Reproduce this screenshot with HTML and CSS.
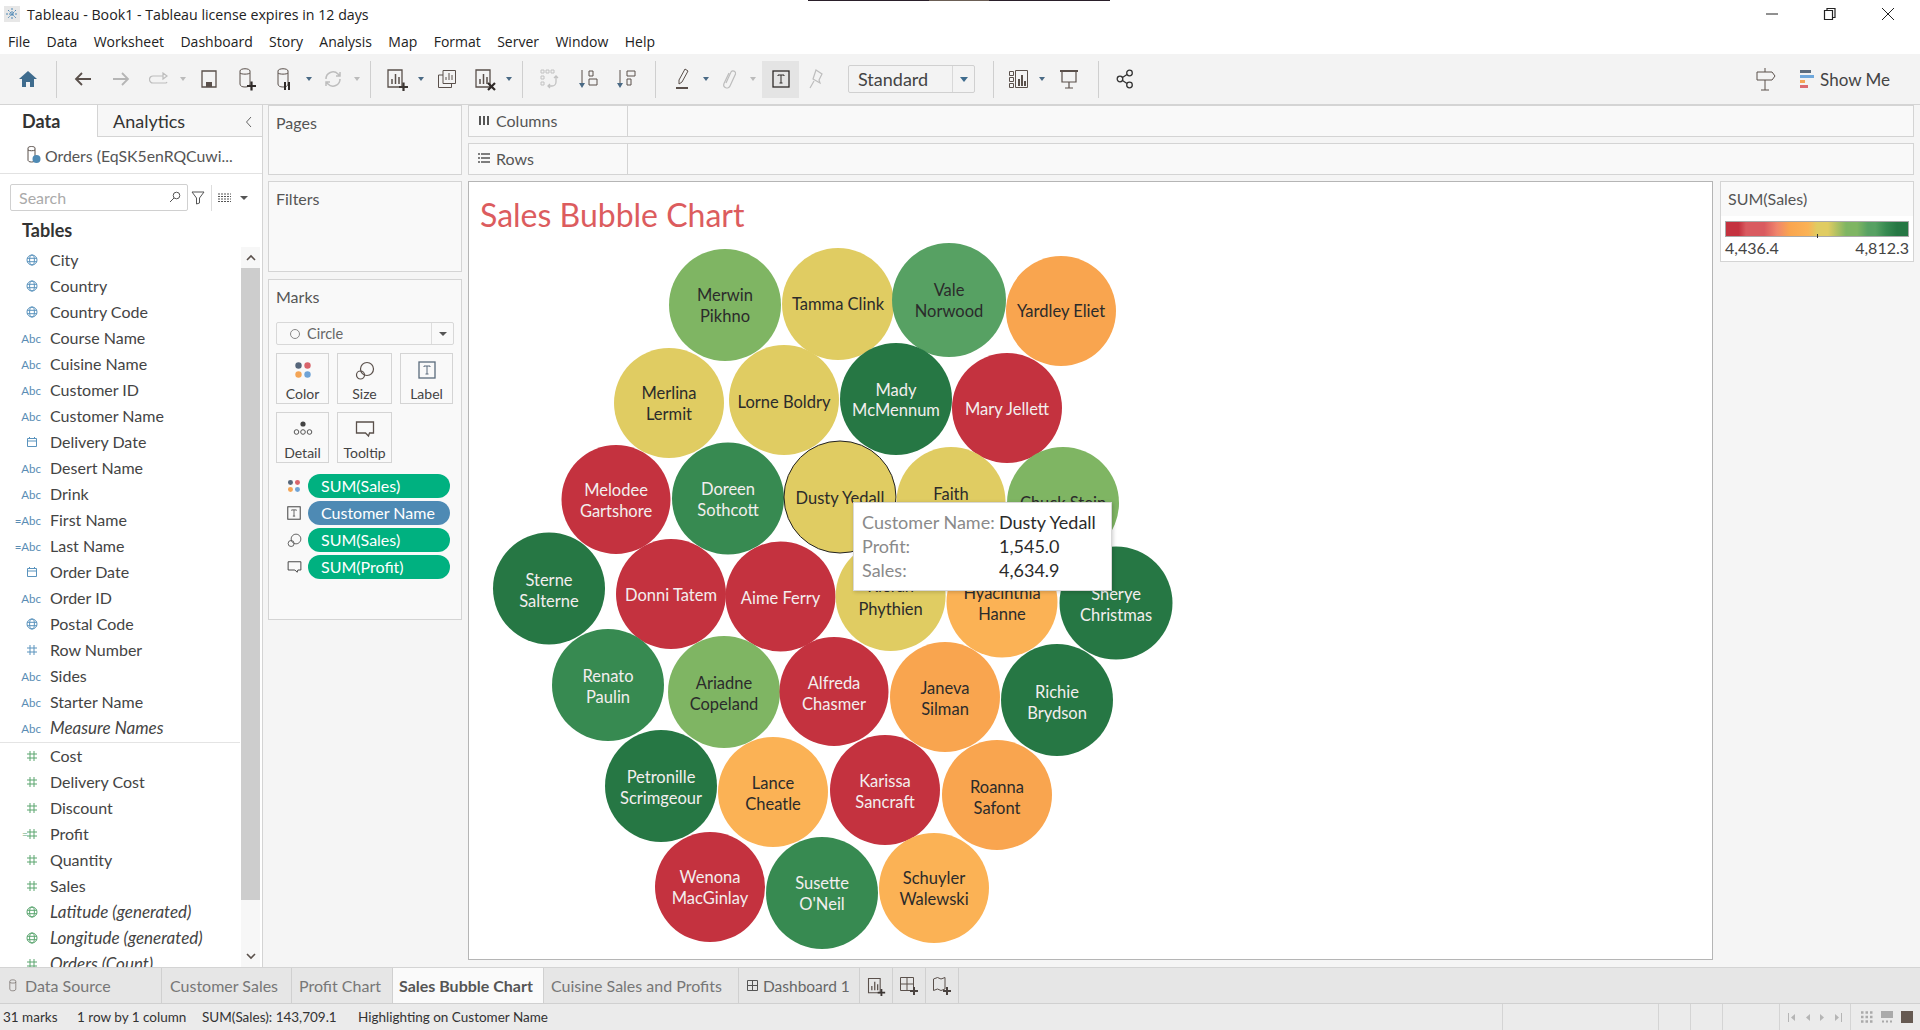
FILE: index.html
```html
<!DOCTYPE html>
<html lang="en">
<head>
    <meta charset="UTF-8">
    <title>Tableau - Book1</title>
    <link rel="stylesheet" href="styles.css">
</head>
<body>
    <svg class="defs" width="0" height="0">
        <symbol id="i-globe" viewBox="0 0 12 12"><g fill="none" stroke="currentColor"><circle cx="6" cy="6" r="5"/><ellipse cx="6" cy="6" rx="2.4" ry="5"/><path d="M1 4.300h10M1 7.700h10"/></g></symbol>
        <symbol id="i-cal" viewBox="0 0 12 12"><path fill="none" stroke="currentColor" d="M1.500 2.500h9v8h-9zM1.500 5h9M3.500 1v2M8.500 1v2"/></symbol>
        <symbol id="i-hash" viewBox="0 0 12 12"><path fill="none" stroke="currentColor" d="M4 1v10M8 1v10M1 4h10M1 8h10"/></symbol>
        <symbol id="i-db" viewBox="0 0 20 24"><path fill="none" stroke="currentColor" d="M3 4c0-3 10-3 10 0v13c0 2-2 3-5 3s-5-1-5-3zM3 6c1 1.500 9 1.500 10 0"/></symbol>
        <symbol id="i-t" viewBox="0 0 18 18"><rect x="1" y="1" width="16" height="16" fill="none" stroke="currentColor" stroke-width="1.300"/><path fill="none" stroke="currentColor" d="M6 6V5h6v1M9 5v8M7.500 13h3"/></symbol>
        <symbol id="i-dots" viewBox="0 0 18 18"><circle cx="4.500" cy="4.500" r="3.200" fill="#56667a"/><circle cx="13.500" cy="4.500" r="3.200" fill="#d9646b"/><circle cx="4.500" cy="13.500" r="3.200" fill="#f4a556"/><circle cx="13.500" cy="13.500" r="3.200" fill="#6fa3d6"/></symbol>
        <symbol id="i-size" viewBox="0 0 20 20"><g fill="none" stroke="currentColor" stroke-width="1.200"><circle cx="12" cy="8" r="6.500"/><circle cx="5.500" cy="14" r="4"/></g></symbol>
        <symbol id="i-tip" viewBox="0 0 20 18"><path fill="none" stroke="currentColor" stroke-width="1.300" d="M1.500 2h17v11h-4l-1 3-3-3h-9z"/></symbol>
        <symbol id="i-plus-chart" viewBox="0 0 24 24"><path fill="none" stroke="currentColor" stroke-width="1.300" d="M3 3h14v17H3z"/><path fill="none" stroke="currentColor" stroke-width="1.500" d="M7 17v-5M10.500 17V7M14 17v-7"/><path fill="none" stroke="#3c3633" stroke-width="2.200" d="M14 20h9M18.500 15.500v9" /></symbol>
    </svg>

    <header class="titlebar">
        <svg class="logo" width="18" height="18" viewBox="0 0 18 18"><rect x="1" y="1" width="16" height="16" fill="#e7e7e7"/><g stroke="#4d87b5"><path d="M9 3v12M3 9h12M5 5l8 8M13 5l-8 8" stroke-dasharray="2 1"/></g></svg>
        <span class="doc-title">Tableau - Book1 - Tableau license expires in 12 days</span>
        <div class="win-btns">
            <svg width="14" height="14" viewBox="0 0 14 14"><path stroke="#222" d="M1 7h12"/></svg>
            <svg width="14" height="14" viewBox="0 0 14 14"><path fill="none" stroke="#222" stroke-width="1.200" d="M1.500 3.500h8v9h-8zM4 3.500V1.500h8v9H9.500"/></svg>
            <svg width="14" height="14" viewBox="0 0 14 14"><path stroke="#222" d="M1 1l12 12M13 1L1 13"/></svg>
        </div>
        <div class="top-line"></div>
    </header>

    <nav class="menubar">
        <span>File</span><span>Data</span><span>Worksheet</span><span>Dashboard</span><span>Story</span><span>Analysis</span><span>Map</span><span>Format</span><span>Server</span><span>Window</span><span>Help</span>
    </nav>

    <div class="toolbar">
        <span class="tool home"><svg width="20" height="18" viewBox="0 0 20 18"><path fill="#3f6c8e" d="M10 1L1 9h3v8h4v-5h4v5h4V9h3z"/></svg></span>
        <i class="sep"></i>
        <span class="tool"><svg width="20" height="16" viewBox="0 0 20 16"><path fill="none" stroke="#5a504b" stroke-width="1.800" d="M18 8H3M9 2L3 8l6 6"/></svg></span>
        <span class="tool off"><svg width="20" height="16" viewBox="0 0 20 16"><path fill="none" stroke="#b5b5b5" stroke-width="1.800" d="M2 8h15M11 2l6 6-6 6"/></svg></span>
        <span class="tool off"><svg width="20" height="14" viewBox="0 0 20 14"><path fill="none" stroke="#bdbdbd" stroke-width="1.200" d="M14 4H4a3 3 0 0 0 0 7h13a3 3 0 0 0 1-1M14 1v6l4-3z"/></svg></span>
        <i class="caret off"></i>
        <span class="tool shift2"><svg width="18" height="20" viewBox="0 0 18 20"><path fill="none" stroke="#5a504b" stroke-width="1.300" d="M2 2h14v16H2z"/><path fill="#5a504b" d="M6 13h6v5H6z"/></svg></span>
        <span class="tool"><svg width="20" height="24" color="#5a504b"><use href="#i-db"/><path fill="none" stroke="#2f2a28" stroke-width="2.200" d="M10 19h9M14.500 14.500v9"/></svg></span>
        <span class="tool"><svg width="20" height="24" color="#5a504b"><use href="#i-db"/><path fill="none" stroke="#2f2a28" stroke-width="2" d="M10 15v8M14 15v8"/></svg></span>
        <i class="caret"></i>
        <span class="tool off"><svg width="20" height="20" viewBox="0 0 20 20"><path fill="none" stroke="#bdbdbd" stroke-width="1.500" d="M3 10a7 7 0 0 1 12-5l2 2M17 10a7 7 0 0 1-12 5l-2-2M17 3v4h-4M3 17v-4h4"/></svg></span>
        <i class="caret off"></i>
        <i class="sep"></i>
        <span class="tool"><svg width="24" height="24" color="#5a504b"><use href="#i-plus-chart"/></svg></span>
        <i class="caret"></i>
        <span class="tool shift2"><svg width="20" height="20" viewBox="0 0 20 20"><path fill="none" stroke="#5a504b" d="M6 1.500h12.500v13H6zM1.500 6H6M1.500 6v12.500h13V14.500M9 11V8M12 11V4M15 11V6"/></svg></span>
        <span class="tool"><svg width="24" height="24" viewBox="0 0 24 24"><path fill="none" stroke="#5a504b" stroke-width="1.300" d="M3 3h14v17H3z"/><path fill="none" stroke="#5a504b" stroke-width="1.500" d="M7 17v-5M10.500 17V7M14 17v-7"/><path fill="none" stroke="#2f2a28" stroke-width="2.200" d="M15 16l7 7M22 16l-7 7"/></svg></span>
        <i class="caret"></i>
        <i class="sep"></i>
        <span class="tool off"><svg width="20" height="22" viewBox="0 0 20 22"><g fill="none" stroke="#c2c2c2"><path d="M2 2h3v3H2zM7 2h3v3H7zM12 2h3v3h-3zM2 8h3v3H2zM2 14h3v3H2z"/><path stroke-width="1.300" d="M17 8v6a4 4 0 0 1-4 4H9M11 16l-2 2 2 2M15 10l2-2 2 2"/></g></svg></span>
        <span class="tool shift2"><svg width="20" height="20" viewBox="0 0 20 20"><path fill="none" stroke="#5a504b" d="M3 1v15M10 2h4v5h-4zM10 10h8v6h-8z"/><path fill="#4a6a85" d="M0 14h6l-3 5z"/></svg></span>
        <span class="tool"><svg width="20" height="20" viewBox="0 0 20 20"><path fill="none" stroke="#5a504b" d="M3 1v15M10 2h8v5h-8zM10 10h4v6h-4z"/><path fill="#4a6a85" d="M0 14h6l-3 5z"/></svg></span>
        <i class="sep wide"></i>
        <span class="tool"><svg width="18" height="24" viewBox="0 0 18 24"><path fill="none" stroke="#5a504b" d="M11 2l3 2-6 11-3 2v-4z"/><path fill="#5a504b" d="M2 20h12v2H2z"/></svg></span>
        <i class="caret narrow"></i>
        <span class="tool off"><svg width="16" height="22" viewBox="0 0 16 22"><path fill="none" stroke="#bdbdbd" stroke-width="1.200" d="M5 15l5-11a2.500 2.500 0 0 1 4.500 2L9 18a3.200 3.200 0 0 1-6-2.500L8 5"/></svg></span>
        <i class="caret off"></i>
        <span class="tool active"><svg width="18" height="18" color="#2e2a28"><use href="#i-t"/></svg></span>
        <span class="tool pin off"><svg width="16" height="22" viewBox="0 0 16 22"><path fill="none" stroke="#bdbdbd" stroke-width="1.200" d="M8 2l6 4-3 6 1 3-7-4zM6 13l-4 7"/></svg></span>
        <div class="fit-select"><span>Standard</span><b><i class="caret blue"></i></b></div>
        <i class="sep fit-sep"></i>
        <span class="tool viz"><svg width="22" height="20" viewBox="0 0 22 20"><g fill="none" stroke="#5a504b"><path d="M1.500 2.500h4v4h-4zM1.500 8.500h4v4h-4zM1.500 14.500h4v4h-4zM7.500 1.500h12v17h-12z"/></g><path fill="#5a504b" d="M10 10h2v7h-2zM13 6h2v11h-2zM16 12h2v5h-2z"/></svg></span>
        <i class="caret"></i>
        <span class="tool shift3"><svg width="20" height="20" viewBox="0 0 20 20"><path fill="none" stroke="#5a504b" stroke-width="1.200" d="M3 2v11h14V2M10 13v6M6 19h8"/><path fill="#5a504b" d="M1 1h18v2H1z"/></svg></span>
        <i class="sep share-sep"></i>
        <span class="tool"><svg width="18" height="20" viewBox="0 0 18 20"><g fill="none" stroke="#333" stroke-width="1.300"><circle cx="13.500" cy="4" r="2.800"/><circle cx="4" cy="10" r="2.800"/><circle cx="13.500" cy="16" r="2.800"/><path d="M6.500 8.500L11 5.500M6.500 11.500l4.500 3"/></g></svg></span>
        <div class="tool-right">
            <svg width="20" height="24" viewBox="0 0 20 24"><path fill="none" stroke="#5a504b" d="M1 5h15l3 4-3 4H1zM9 1v4M9 13v10M5 23h8"/></svg>
            <div class="show-me">
                <svg width="14" height="20" viewBox="0 0 14 20"><path fill="#5d6d7e" d="M0 1h11v3H0z"/><path fill="#6fa8dc" d="M0 6h14v3H0z"/><path fill="#f4a556" d="M0 11h5v3H0z"/><path fill="#dc6a70" d="M0 16h8v3H0z"/></svg>
                <span>Show Me</span>
            </div>
        </div>
    </div>

    <main class="workspace">
        <aside class="data-pane">
            <div class="pane-tabs">
                <div class="pane-tab on">Data</div>
                <div class="pane-tab">Analytics</div>
                <svg class="collapse" width="8" height="12" viewBox="0 0 8 12"><path fill="none" stroke="#666" d="M6 1L1.500 6 6 11"/></svg>
            </div>
            <div class="source">
                <svg width="16" height="20" viewBox="0 0 16 20"><path fill="none" stroke="#5a504b" d="M2 3c0-2 7-2 7 0v12c0 1-1 2-3.500 2S2 16 2 15zM2 5c1 1 6 1 7 0"/><circle cx="10.500" cy="14" r="4" fill="#4e8ab4"/></svg>
                <span>Orders (EqSK5enRQCuwi...</span>
            </div>
            <div class="search-row">
                <div class="search"><span>Search</span><svg width="12" height="12" viewBox="0 0 12 12"><path fill="none" stroke="#555" d="M5 7l-4 4"/><circle cx="7.500" cy="4.500" r="3.300" fill="none" stroke="#555"/></svg></div>
                <svg class="funnel" width="14" height="14" viewBox="0 0 14 14"><path fill="none" stroke="#555" d="M1 1h12L8.500 7v5l-3 1V7z"/></svg>
                <i class="mini-sep"></i>
                <svg class="view-ic" width="13" height="10" viewBox="0 0 13 10"><path stroke="#555" stroke-dasharray="2 1" d="M0 1h13M0 3.500h13M0 6h13M0 8.500h13"/></svg>
                <i class="caret dark"></i>
            </div>
            <h3 class="tables">Tables</h3>
            <div class="fields-wrap">
                <ul class="fields">
                    <li><span class="ic blue"><svg width="12" height="12"><use href="#i-globe"/></svg></span>City</li>
                    <li><span class="ic blue"><svg width="12" height="12"><use href="#i-globe"/></svg></span>Country</li>
                    <li><span class="ic blue"><svg width="12" height="12"><use href="#i-globe"/></svg></span>Country Code</li>
                    <li><span class="ic abc">Abc</span>Course Name</li>
                    <li><span class="ic abc">Abc</span>Cuisine Name</li>
                    <li><span class="ic abc">Abc</span>Customer ID</li>
                    <li><span class="ic abc">Abc</span>Customer Name</li>
                    <li><span class="ic blue"><svg width="12" height="12"><use href="#i-cal"/></svg></span>Delivery Date</li>
                    <li><span class="ic abc">Abc</span>Desert Name</li>
                    <li><span class="ic abc">Abc</span>Drink</li>
                    <li><span class="ic abc">=Abc</span>First Name</li>
                    <li><span class="ic abc">=Abc</span>Last Name</li>
                    <li><span class="ic blue"><svg width="12" height="12"><use href="#i-cal"/></svg></span>Order Date</li>
                    <li><span class="ic abc">Abc</span>Order ID</li>
                    <li><span class="ic blue"><svg width="12" height="12"><use href="#i-globe"/></svg></span>Postal Code</li>
                    <li><span class="ic blue"><svg width="12" height="12"><use href="#i-hash"/></svg></span>Row Number</li>
                    <li><span class="ic abc">Abc</span>Sides</li>
                    <li><span class="ic abc">Abc</span>Starter Name</li>
                    <li class="gen"><span class="ic abc">Abc</span>Measure Names</li>
                </ul>
                <ul class="fields measures">
                    <li><span class="ic green"><svg width="12" height="12"><use href="#i-hash"/></svg></span>Cost</li>
                    <li><span class="ic green"><svg width="12" height="12"><use href="#i-hash"/></svg></span>Delivery Cost</li>
                    <li><span class="ic green"><svg width="12" height="12"><use href="#i-hash"/></svg></span>Discount</li>
                    <li><span class="ic green calc"><svg width="12" height="12"><use href="#i-hash"/></svg></span>Profit</li>
                    <li><span class="ic green"><svg width="12" height="12"><use href="#i-hash"/></svg></span>Quantity</li>
                    <li><span class="ic green"><svg width="12" height="12"><use href="#i-hash"/></svg></span>Sales</li>
                    <li class="gen"><span class="ic green"><svg width="12" height="12"><use href="#i-globe"/></svg></span>Latitude (generated)</li>
                    <li class="gen"><span class="ic green"><svg width="12" height="12"><use href="#i-globe"/></svg></span>Longitude (generated)</li>
                    <li class="gen"><span class="ic green"><svg width="12" height="12"><use href="#i-hash"/></svg></span>Orders (Count)</li>
                </ul>
                <div class="scroll">
                    <div class="scroll-btn"><svg width="10" height="7" viewBox="0 0 10 7"><path fill="none" stroke="#5a504b" stroke-width="1.600" d="M1 6l4-4 4 4"/></svg></div>
                    <div class="scroll-thumb"></div>
                    <div class="scroll-btn down"><svg width="10" height="7" viewBox="0 0 10 7"><path fill="none" stroke="#5a504b" stroke-width="1.600" d="M1 1l4 4 4-4"/></svg></div>
                </div>
            </div>
        </aside>

        <section class="shelves">
            <div class="card pages"><h4>Pages</h4></div>
            <div class="card filters"><h4>Filters</h4></div>
            <div class="card marks">
                <h4>Marks</h4>
                <div class="mark-type">
                    <span class="ring"></span><span class="mark-name">Circle</span>
                    <b><i class="caret dark"></i></b>
                </div>
                <div class="mark-btns">
                    <div class="mark-btn"><svg width="18" height="18"><use href="#i-dots"/></svg><span>Color</span></div>
                    <div class="mark-btn"><svg width="20" height="20" color="#5a504b"><use href="#i-size"/></svg><span>Size</span></div>
                    <div class="mark-btn"><svg width="18" height="18" color="#5a6b7c"><use href="#i-t"/></svg><span>Label</span></div>
                    <div class="mark-btn"><svg width="20" height="18" viewBox="0 0 20 18"><circle cx="10" cy="4" r="2.600" fill="#444"/><g fill="none" stroke="#555"><circle cx="3.500" cy="12" r="2.300"/><circle cx="10" cy="12" r="2.300"/><circle cx="16.500" cy="12" r="2.300"/></g></svg><span>Detail</span></div>
                    <div class="mark-btn"><svg width="20" height="18" color="#5a504b"><use href="#i-tip"/></svg><span>Tooltip</span></div>
                </div>
                <div class="pill-row"><svg width="14" height="14"><use href="#i-dots"/></svg><span class="pill">SUM(Sales)</span></div>
                <div class="pill-row"><svg width="14" height="14" color="#444"><use href="#i-t"/></svg><span class="pill dim">Customer Name</span></div>
                <div class="pill-row"><svg width="15" height="15" color="#555"><use href="#i-size"/></svg><span class="pill">SUM(Sales)</span></div>
                <div class="pill-row"><svg width="15" height="14" color="#444"><use href="#i-tip"/></svg><span class="pill">SUM(Profit)</span></div>
            </div>
        </section>

        <section class="view">
            <div class="shelf">
                <div class="shelf-label"><svg width="12" height="12" viewBox="0 0 12 12"><path stroke="#555" stroke-width="2" d="M2 2v9M6 2v9M10 2v9"/></svg>Columns</div>
            </div>
            <div class="shelf">
                <div class="shelf-label"><svg width="12" height="12" viewBox="0 0 12 12"><path stroke="#555" stroke-width="1.500" d="M0 2h2M3 2h9M0 6h2M3 6h9M0 10h2M3 10h9"/></svg>Rows</div>
            </div>
            <div class="view-body">
                <div class="sheet">
                    <h1 class="sheet-title">Sales Bubble Chart</h1>
                    <svg class="bubbles" width="1243" height="719" viewBox="469 240 1243 719">
                        <g transform="translate(725 305)"><circle class="b-lg" r="56"/><text class="ink"><tspan x="0" y="-5">Merwin</tspan><tspan x="0" y="16">Pikhno</tspan></text></g>
                        <g transform="translate(838 304)"><circle class="b-yl" r="56"/><text class="ink" y="5">Tamma Clink</text></g>
                        <g transform="translate(949 300)"><circle class="b-mg" r="57"/><text class="ink"><tspan x="0" y="-5">Vale</tspan><tspan x="0" y="16">Norwood</tspan></text></g>
                        <g transform="translate(1061 311)"><circle class="b-or" r="55"/><text class="ink" y="5">Yardley Eliet</text></g>
                        <g transform="translate(669 403)"><circle class="b-yl" r="55"/><text class="ink"><tspan x="0" y="-5">Merlina</tspan><tspan x="0" y="16">Lermit</tspan></text></g>
                        <g transform="translate(784 400)"><circle class="b-yl" r="55"/><text class="ink" y="7">Lorne Boldry</text></g>
                        <g transform="translate(896 399)"><circle class="b-dg" r="56"/><text class="lt"><tspan x="0" y="-4">Mady</tspan><tspan x="0" y="16">McMennum</tspan></text></g>
                        <g transform="translate(1007 408)"><circle class="b-rd" r="55"/><text class="lt" y="6">Mary Jellett</text></g>
                        <g transform="translate(616 499.500)"><circle class="b-rd" r="54.500"/><text class="lt"><tspan x="0" y="-5">Melodee</tspan><tspan x="0" y="16">Gartshore</tspan></text></g>
                        <g transform="translate(728 498.500)"><circle class="b-gr" r="56"/><text class="lt"><tspan x="0" y="-5">Doreen</tspan><tspan x="0" y="16">Sothcott</tspan></text></g>
                        <g transform="translate(840 497)"><circle class="b-yl picked" r="56"/><text class="ink" y="6">Dusty Yedall</text></g>
                        <g transform="translate(951 501.500)"><circle class="b-yl" r="54.500"/><text class="ink" y="-3">Faith</text></g>
                        <g transform="translate(1063 503)"><circle class="b-lg" r="56"/><text class="ink" y="5">Chuck Stein</text></g>
                        <g transform="translate(549 588.500)"><circle class="b-dg" r="56"/><text class="lt"><tspan x="0" y="-4">Sterne</tspan><tspan x="0" y="17">Salterne</tspan></text></g>
                        <g transform="translate(671 594)"><circle class="b-rd" r="55"/><text class="lt" y="6">Donni Tatem</text></g>
                        <g transform="translate(780.500 596.500)"><circle class="b-rd" r="55"/><text class="lt" y="6">Aime Ferry</text></g>
                        <g transform="translate(890.600 596)"><circle class="b-yl" r="55"/><text class="ink"><tspan x="0" y="-5">Kieran</tspan><tspan x="0" y="18">Phythien</tspan></text></g>
                        <g transform="translate(1002 602)"><circle class="b-ol" r="55.500"/><text class="ink"><tspan x="0" y="-4">Hyacinthia</tspan><tspan x="0" y="17">Hanne</tspan></text></g>
                        <g transform="translate(1116 603)"><circle class="b-dg" r="56.500"/><text class="lt"><tspan x="0" y="-4">Sherye</tspan><tspan x="0" y="17">Christmas</tspan></text></g>
                        <g transform="translate(608 685)"><circle class="b-gr" r="56"/><text class="lt"><tspan x="0" y="-4">Renato</tspan><tspan x="0" y="17">Paulin</tspan></text></g>
                        <g transform="translate(724 692)"><circle class="b-lg" r="56"/><text class="ink"><tspan x="0" y="-4">Ariadne</tspan><tspan x="0" y="17">Copeland</tspan></text></g>
                        <g transform="translate(834 691.500)"><circle class="b-rd" r="54.500"/><text class="lt"><tspan x="0" y="-4">Alfreda</tspan><tspan x="0" y="17">Chasmer</tspan></text></g>
                        <g transform="translate(945 697)"><circle class="b-or" r="55"/><text class="ink"><tspan x="0" y="-4">Janeva</tspan><tspan x="0" y="17">Silman</tspan></text></g>
                        <g transform="translate(1057 700)"><circle class="b-dg" r="56"/><text class="lt"><tspan x="0" y="-3">Richie</tspan><tspan x="0" y="18">Brydson</tspan></text></g>
                        <g transform="translate(661 786)"><circle class="b-dg" r="56"/><text class="lt"><tspan x="0" y="-4">Petronille</tspan><tspan x="0" y="17">Scrimgeour</tspan></text></g>
                        <g transform="translate(773 792)"><circle class="b-ol" r="55"/><text class="ink"><tspan x="0" y="-4">Lance</tspan><tspan x="0" y="17">Cheatle</tspan></text></g>
                        <g transform="translate(885 790)"><circle class="b-rd" r="55"/><text class="lt"><tspan x="0" y="-4">Karissa</tspan><tspan x="0" y="17">Sancraft</tspan></text></g>
                        <g transform="translate(997 795)"><circle class="b-or" r="55"/><text class="ink"><tspan x="0" y="-3">Roanna</tspan><tspan x="0" y="18">Safont</tspan></text></g>
                        <g transform="translate(710 887)"><circle class="b-rd" r="55"/><text class="lt"><tspan x="0" y="-5">Wenona</tspan><tspan x="0" y="16">MacGinlay</tspan></text></g>
                        <g transform="translate(822 893)"><circle class="b-gr" r="56"/><text class="lt"><tspan x="0" y="-5">Susette</tspan><tspan x="0" y="16">O'Neil</tspan></text></g>
                        <g transform="translate(934 888)"><circle class="b-ol" r="55"/><text class="ink"><tspan x="0" y="-5">Schuyler</tspan><tspan x="0" y="16">Walewski</tspan></text></g>
                    </svg>
                    <div class="tooltip">
                        <span class="k">Customer Name:</span><span class="v">Dusty Yedall</span>
                        <span class="k">Profit:</span><span class="v">1,545.0</span>
                        <span class="k">Sales:</span><span class="v">4,634.9</span>
                    </div>
                </div>
                <div class="legend">
                    <div class="legend-title">SUM(Sales)</div>
                    <div class="legend-body">
                        <div class="legend-bar"><i></i></div>
                        <div class="legend-range"><span>4,436.4</span><span>4,812.3</span></div>
                    </div>
                </div>
            </div>
        </section>
    </main>

    <div class="tabstrip">
        <div class="tab w163"><svg width="12" height="16" color="#5a504b" viewBox="0 0 20 24"><use href="#i-db"/></svg>Data Source</div>
        <div class="tab w130">Customer Sales</div>
        <div class="tab w101">Profit Chart</div>
        <div class="tab on">Sales Bubble Chart</div>
        <div class="tab w195">Cuisine Sales and Profits</div>
        <div class="tab w121"><svg width="13" height="13" viewBox="0 0 13 13"><path fill="none" stroke="#555" d="M1.500 1.500h10v10h-10zM6.500 1.500v10M1.500 6.500h10"/></svg>Dashboard 1</div>
        <div class="tab add"><svg width="20" height="20" color="#5a504b" viewBox="0 0 24 24"><use href="#i-plus-chart"/></svg></div>
        <div class="tab add"><svg width="20" height="20" viewBox="0 0 20 20"><path fill="none" stroke="#5a504b" d="M1.500 1.500h13v13h-13zM8 1.500v13M1.500 8h13"/><path stroke="#4a4340" stroke-width="2" d="M11 15h8M15 11v8"/></svg></div>
        <div class="tab add"><svg width="20" height="20" viewBox="0 0 20 20"><path fill="none" stroke="#5a504b" d="M1.500 3l4-1.500L9 3l4-1.500V13l-4 1.500L5.500 13l-4 1.500z"/><path stroke="#4a4340" stroke-width="2" d="M11 15h8M15 11v8"/></svg></div>
    </div>

    <footer class="statusbar">
        <span class="st marks-n">31 marks</span>
        <span class="st rows-n">1 row by 1 column</span>
        <span class="st sum-n">SUM(Sales): 143,709.1</span>
        <span class="st">Highlighting on Customer Name</span>
        <div class="st-cells">
            <i class="cell c156"></i><i class="cell c32"></i><i class="cell c32"></i><i class="cell c57"></i>
            <div class="cell nav">
                <svg width="8" height="9" viewBox="0 0 8 9"><path fill="#b5b5b5" d="M0 0h1v9H0zM7 1v7L3 4.500z"/></svg>
                <svg width="6" height="9" viewBox="0 0 6 9"><path fill="#b5b5b5" d="M5 1v7L1 4.500z"/></svg>
                <svg width="6" height="9" viewBox="0 0 6 9"><path fill="#b5b5b5" d="M1 1v7l4-3.500z"/></svg>
                <svg width="8" height="9" viewBox="0 0 8 9"><path fill="#b5b5b5" d="M7 0h1v9H7zM1 1v7l4-3.500z"/></svg>
            </div>
            <div class="cell views">
                <svg width="12" height="12" viewBox="0 0 12 12"><path stroke="#aaa" stroke-width="2.500" stroke-dasharray="2.500 2" d="M0 1.500h12M0 6h12M0 10.500h12"/></svg>
                <svg width="12" height="12" viewBox="0 0 12 12"><path fill="#aaa" d="M0 0h12v7H0z"/><path stroke="#aaa" stroke-width="2" stroke-dasharray="2 2" d="M1 10.500h11"/></svg>
                <span class="big-view"></span>
            </div>
        </div>
    </footer>
</body>
</html>
```

FILE: styles.css
```css
* {
    box-sizing: border-box;
}

html, body {
    margin: 0;
    height: 1030px;
    overflow: hidden;
}

body {
    position: relative;
    display: flex;
    flex-direction: column;
    background-color: #f5f5f5;
    color: #333;
    font-family: Lato, Roboto, sans-serif;
    font-size: 16px;
}

.defs {
    position: absolute;
}

h1, h3, h4, ul {
    margin: 0;
    padding: 0;
    font-weight: normal;
}

ul {
    list-style: none;
}

/* window title + menu */
.titlebar {
    position: relative;
    display: flex;
    align-items: center;
    height: 27px;
    padding: 1px 0 0 3px;
    background-color: #fff;
    font-family: "Open Sans", sans-serif;
    font-size: 14.200px;
    color: #222;
}

.doc-title {
    margin-left: 6px;
}

.win-btns {
    display: flex;
    gap: 44px;
    margin-left: auto;
    margin-right: 25px;
}

.top-line {
    position: absolute;
    left: 808px;
    top: 0;
    width: 302px;
    height: 1px;
    background: linear-gradient(90deg, #2a1f2a 40%, #6b5e55 40%, #6b5e55 60%, #2a1f2a 60%);
}

.menubar {
    display: flex;
    align-items: center;
    gap: 16.400px;
    height: 27px;
    padding: 1px 0 0 8px;
    background-color: #fff;
    font-family: "Open Sans", sans-serif;
    font-size: 14px;
    color: #222;
}

/* toolbar */
.toolbar {
    display: flex;
    align-items: center;
    height: 51px;
    padding: 0 30px 0 8px;
    background-color: #f3f3f3;
    border-bottom: 1px solid #d4d4d4;
}

.tool {
    display: flex;
    align-items: center;
    justify-content: center;
    flex: none;
    width: 38px;
    height: 37px;
}

.tool.home {
    width: 40px;
}

.tool.active {
    width: 37px;
    margin-left: 4px;
    background-color: #e4e4e4;
}

.tool.pin {
    width: 34px;
}

.tool.viz {
    width: 36px;
}

.shift2 {
    margin-left: 2px;
}

.shift3 {
    margin-left: 3px;
}

.sep {
    flex: none;
    width: 1px;
    height: 37px;
    margin: 0 7px 0 8px;
    background-color: #cfcfcf;
}

.sep.wide {
    margin-right: 8px;
    margin-left: 9px;
}

.fit-sep {
    margin-left: 18px;
}

.share-sep {
    margin-left: 10px;
}

.caret {
    flex: none;
    width: 6px;
    height: 4px;
    margin: 0 2px;
    border-style: solid;
    border-width: 4px 3px 0;
    border-color: #4a6a85 transparent transparent;
}

.caret.off {
    border-top-color: #bbb;
}

.caret.narrow {
    margin: 0 1px;
}

.caret.blue {
    width: 8px;
    height: 5px;
    border-top-color: #3f6c8e;
    border-width: 5px 4px 0;
}

.caret.dark {
    width: 8px;
    border-top-color: #555;
    border-width: 4px 4px 0;
}

.fit-select {
    display: flex;
    flex: none;
    align-items: center;
    width: 127px;
    height: 28px;
    margin-left: 15px;
    padding-left: 9px;
    border: 1px solid #d0d0d0;
    border-radius: 2px;
    font-size: 18px;
    color: #444;
}

.fit-select span {
    flex: 1;
}

.fit-select b {
    display: flex;
    align-items: center;
    justify-content: center;
    width: 22px;
    height: 100%;
    border-left: 1px solid #d8d8d8;
}

.tool-right {
    display: flex;
    align-items: center;
    margin-left: auto;
    gap: 24px;
}

.show-me {
    display: flex;
    align-items: center;
    gap: 6px;
    font-size: 17px;
    color: #444;
}

/* main area */
.workspace {
    display: flex;
    height: 862px;
}

.data-pane {
    display: flex;
    flex: none;
    flex-direction: column;
    width: 263px;
    background-color: #fff;
    border-right: 1px solid #d4d4d4;
}

.pane-tabs {
    position: relative;
    display: flex;
    height: 32px;
}

.pane-tab {
    display: flex;
    align-items: center;
    padding-left: 22px;
    width: 98px;
    font-size: 18px;
    font-weight: 700;
    border-right: 1px solid #d4d4d4;
}

.pane-tab + .pane-tab {
    flex: 1;
    padding-left: 15px;
    font-weight: normal;
    border-right: none;
    border-bottom: 1px solid #d4d4d4;
    background-color: #f7f7f7;
}

.collapse {
    position: absolute;
    right: 9px;
    top: 11px;
}

.source {
    display: flex;
    align-items: center;
    gap: 3px;
    height: 37px;
    padding-left: 26px;
    border-bottom: 1px solid #e2e2e2;
    font-size: 15.800px;
    color: #555;
}

.search-row {
    display: flex;
    align-items: center;
    height: 27px;
    margin-top: 10px;
    padding-left: 10px;
}

.search {
    display: flex;
    align-items: center;
    justify-content: space-between;
    width: 178px;
    height: 27px;
    padding: 0 6px 1px 8px;
    border: 1px solid #d0d0d0;
    border-radius: 2px;
    color: #aaa;
}

.funnel {
    margin-left: 3px;
}

.mini-sep {
    width: 1px;
    height: 26px;
    margin: 0 6px;
    background-color: #ddd;
}

.view-ic {
    margin-right: 7px;
}

.tables {
    height: 30px;
    margin-top: 6px;
    padding-left: 22px;
    font-size: 18px;
    line-height: 26px;
    font-weight: 700;
}

.fields-wrap {
    position: relative;
    flex: 1;
    overflow: hidden;
}

.fields li {
    display: flex;
    align-items: center;
    height: 26px;
    padding-bottom: 2px;
    color: #444;
}

.fields .gen {
    font-size: 17px;
    font-style: italic;
}

.ic {
    display: flex;
    align-items: center;
    justify-content: center;
    flex: none;
    width: 24px;
    margin: 2px 6px 0 20px;
}

.ic.blue {
    color: #5a93bd;
}

.ic.green {
    color: #5aa56f;
}

.ic.calc::before {
    content: "=";
    position: absolute;
    left: 22px;
    font-size: 10px;
}

.ic.abc {
    justify-content: flex-end;
    padding-right: 3px;
    font-size: 11.500px;
    font-style: normal;
    color: #5a8db4;
}

.measures {
    margin: 1px 22px 0 0;
    border-top: 1px solid #e4e4e4;
}

.scroll {
    position: absolute;
    left: 241px;
    top: 0;
    bottom: 0;
    display: flex;
    flex-direction: column;
    width: 19px;
    background-color: #f7f7f7;
}

.scroll-btn {
    display: flex;
    align-items: center;
    justify-content: center;
    height: 21px;
}

.scroll-btn.down {
    margin-top: auto;
    height: 22px;
}

.scroll-thumb {
    height: 632px;
    background-color: #cdcdcd;
}

/* pages, filters, marks */
.shelves {
    flex: none;
    width: 194px;
    margin-left: 5px;
}

.card {
    background-color: #f9f9f9;
    border: 1px solid #d4d4d4;
    padding: 8px 7px;
}

.card h4 {
    font-size: 16px;
    line-height: 18px;
    color: #555;
}

.pages {
    height: 70px;
    margin-bottom: 6px;
}

.filters {
    height: 91px;
    margin-bottom: 7px;
}

.marks {
    height: 341px;
}

.mark-type {
    display: flex;
    align-items: center;
    height: 23px;
    margin: 16px 0 0;
    padding-left: 13px;
    border: 1px solid #d8d8d8;
    border-radius: 2px;
    font-size: 14.500px;
    color: #666;
}

.ring {
    width: 10px;
    height: 10px;
    margin-right: 7px;
    border: 1px solid #888;
    border-radius: 50%;
}

.mark-name {
    flex: 1;
}

.mark-type b {
    display: flex;
    align-items: center;
    justify-content: center;
    width: 22px;
    height: 100%;
    border-left: 1px solid #ddd;
}

.mark-btns {
    display: grid;
    grid-template-columns: 53px 55px 53px;
    grid-auto-rows: 51px;
    gap: 8px;
    margin: 8px 0 11px;
}

.mark-btn {
    display: flex;
    flex-direction: column;
    align-items: center;
    justify-content: space-between;
    padding: 7px 0 1px;
    border: 1px solid #d4d4d4;
    font-size: 14px;
    color: #444;
}

.pill-row {
    display: flex;
    align-items: center;
    justify-content: space-between;
    height: 24px;
    margin: 0 4px 3px 11px;
}

.pill {
    display: block;
    width: 142px;
    height: 24px;
    padding-left: 13px;
    border-radius: 12px;
    background-color: #00b180;
    color: #fff;
    font-size: 16px;
    line-height: 24px;
}

.pill.dim {
    background-color: #4e8ab4;
}

/* columns, rows, sheet */
.view {
    flex: none;
    width: 1446px;
    margin-left: 6px;
}

.shelf {
    height: 32px;
    margin-bottom: 6px;
    background-color: #f9f9f9;
    border: 1px solid #d4d4d4;
}

.shelf-label {
    display: flex;
    align-items: center;
    gap: 6px;
    width: 159px;
    height: 100%;
    padding: 0 0 2px 9px;
    border-right: 1px solid #d4d4d4;
    color: #555;
}

.view-body {
    display: flex;
    align-items: flex-start;
    gap: 7px;
}

.sheet {
    position: relative;
    width: 1245px;
    height: 779px;
    background-color: #fff;
    border: 1px solid #b5b5b5;
}

.sheet-title {
    height: 58px;
    padding-left: 11px;
    font-size: 32px;
    line-height: 66px;
    color: #dc5c5e;
}

.bubbles {
    display: block;
}

.bubbles text {
    font-size: 16.500px;
    text-anchor: middle;
    transform: translateY(1px);
}

.bubbles .ink {
    fill: #2b2b2b;
}

.bubbles .lt {
    fill: #f3eeee;
}

.b-rd { fill: #c4323f; }
.b-or { fill: #f9a54f; }
.b-ol { fill: #fbb255; }
.b-yl { fill: #e0cc62; }
.b-lg { fill: #7fb563; }
.b-mg { fill: #57a163; }
.b-gr { fill: #378a51; }
.b-dg { fill: #267744; }

.picked {
    stroke: #222;
    stroke-width: 1;
}

.tooltip {
    position: absolute;
    left: 384px;
    top: 320px;
    display: grid;
    grid-template-columns: 137px auto;
    grid-auto-rows: 24px;
    align-items: center;
    width: 259px;
    height: 89px;
    padding: 7px 8px;
    background-color: #fff;
    border: 1px solid #d8d8d8;
    box-shadow: 1px 1px 4px rgba(0, 0, 0, 0.2);
    font-size: 18px;
}

.tooltip .k {
    color: #8a8a8a;
}

.tooltip .v {
    color: #2b2b2b;
}

.legend {
    width: 194px;
    height: 81px;
    background-color: #f9f9f9;
    border: 1px solid #d4d4d4;
}

.legend-title {
    height: 34px;
    padding-left: 7px;
    line-height: 34px;
    color: #555;
}

.legend-body {
    height: 45px;
    padding: 5px 4px 0;
    background-color: #fff;
}

.legend-bar {
    position: relative;
    height: 16px;
    border: 1px solid #aaa;
    background: linear-gradient(90deg, #c4323f 0, #c4323f 7%, #d95b60 11%, #d95b60 21%, #f0856c 28%, #f9a54f 35%, #fbb255 45%, #e0cc62 50%, #e0cc62 56%, #7fb563 66%, #7fb563 72%, #57a163 78%, #57a163 82%, #378a51 88%, #267744 94%, #267744 100%);
}

.legend-bar i {
    position: absolute;
    left: 50%;
    bottom: -2px;
    width: 1px;
    height: 4px;
    background-color: #333;
}

.legend-range {
    display: flex;
    justify-content: space-between;
    margin-top: 1px;
    line-height: 20px;
    color: #444;
}

/* sheet tabs + status */
.tabstrip {
    display: flex;
    height: 37px;
    background-color: #e6e6e6;
    border-top: 1px solid #d4d4d4;
    border-bottom: 1px solid #d0d0d0;
}

.tab {
    display: flex;
    align-items: center;
    gap: 5px;
    flex: none;
    height: 100%;
    padding-left: 7px;
    border-right: 1px solid #d0d0d0;
    color: #777;
}

.w163 {
    width: 162px;
    padding-left: 8px;
}

.w130 {
    width: 130px;
    padding-left: 8px;
}

.w101 {
    width: 101px;
}

.tab.on {
    width: 151px;
    padding-left: 6px;
    background-color: #fafafa;
    color: #555;
    font-weight: 700;
}

.w195 {
    width: 195px;
}

.w121 {
    width: 121px;
    gap: 4px;
    padding-left: 7px;
    color: #666;
    font-size: 15.500px;
}

.tab.add {
    justify-content: center;
    width: 33px;
    padding-left: 0;
}

.statusbar {
    display: flex;
    align-items: center;
    height: 26px;
    padding-left: 3px;
    background-color: #ebebeb;
    font-size: 13.500px;
    color: #333;
}

.marks-n {
    width: 74px;
}

.rows-n {
    width: 125px;
}

.sum-n {
    width: 156px;
}

.st-cells {
    display: flex;
    height: 100%;
    margin-left: auto;
}

.cell {
    display: flex;
    align-items: center;
    justify-content: space-around;
    height: 100%;
    border-left: 1px solid #d4d4d4;
}

.c156 {
    width: 156px;
}

.c32 {
    width: 32px;
}

.c57 {
    width: 57px;
}

.nav {
    width: 71px;
    padding: 0 4px;
}

.views {
    width: 70px;
    padding: 0 3px 0 6px;
}

.big-view {
    width: 12px;
    height: 12px;
    background-color: #665a52;
}
```
